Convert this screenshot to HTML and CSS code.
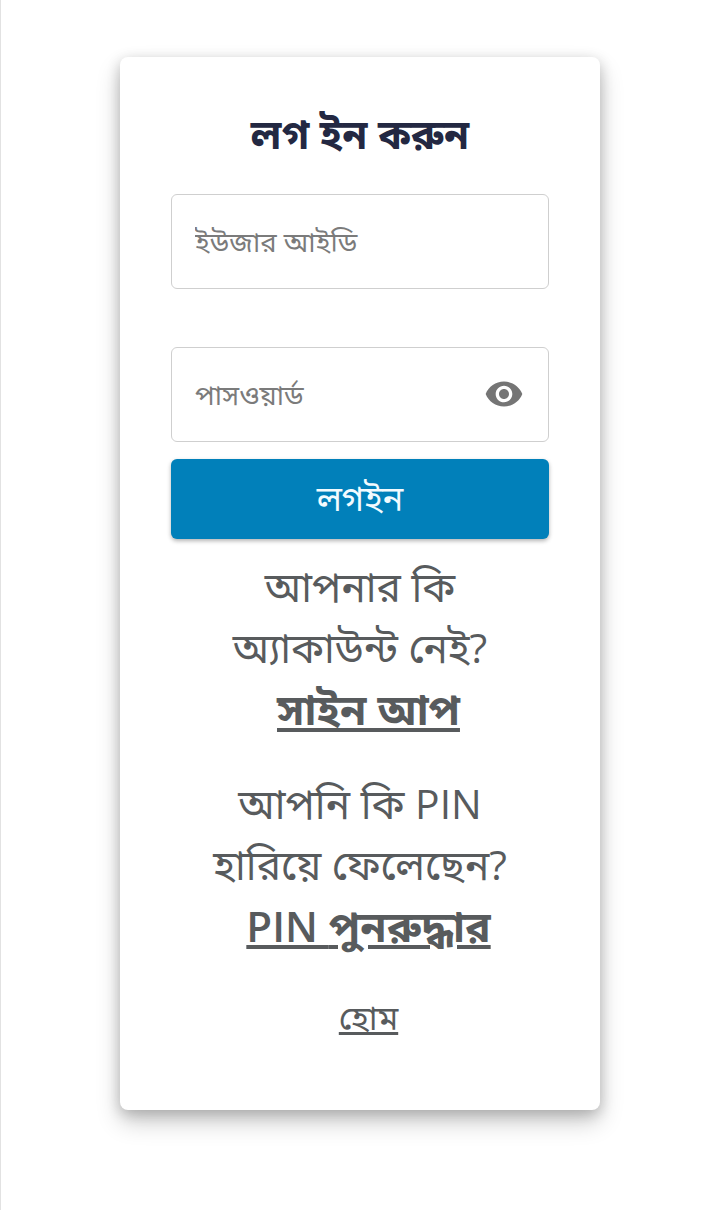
FILE: index.html
```html
<!DOCTYPE html>
<html lang="bn">
<head>
<meta charset="utf-8">
<title>লগ ইন করুন</title>
<link rel="stylesheet" href="styles.css">
</head>
<body>
<main class="page">
  <section class="card">
    <h1 class="title">লগ ইন করুন</h1>
    <form class="form">
      <div class="field field-user"><input class="input" type="text" placeholder="ইউজার আইডি"></div>
      <div class="field">
        <input class="input" type="password" placeholder="পাসওয়ার্ড">
        <svg class="eye" viewBox="0 0 24 24" aria-hidden="true"><path d="M12 4.5C7 4.5 2.73 7.61 1 12c1.73 4.39 6 7.5 11 7.5s9.27-3.11 11-7.5c-1.73-4.39-6-7.5-11-7.5zM12 17c-2.76 0-5-2.24-5-5s2.24-5 5-5 5 2.24 5 5-2.24 5-5 5zm0-8c-1.66 0-3 1.34-3 3s1.34 3 3 3 3-1.34 3-3-1.34-3-3-3z"/></svg>
      </div>
      <button class="submit" type="button">লগইন</button>
    </form>
    <p class="prompt">আপনার কি<br>অ্যাকাউন্ট নেই?<br><a class="link strong" href="#">সাইন আপ</a></p>
    <p class="prompt second">আপনি কি PIN<br>হারিয়ে ফেলেছেন?<br><a class="link strong" href="#"><span class="latin">PIN </span>পুনরুদ্ধার</a></p>
    <p class="home"><a class="link" href="#">হোম</a></p>
  </section>
</main>
</body>
</html>
```
FILE: styles.css
```css
* { box-sizing: border-box; }
html, body { margin: 0; height: 100%; }
body {
  background: #fff;
  border-left: 1px solid #e2e2e2;
  font-family: "Open Sans", "Noto Sans Bengali", "Noto Sans", sans-serif;
  color: #585b5d;
}
.page { padding: 57px 119px 0 119px; }
.card {
  height: 1053px;
  background: #fff;
  border-radius: 8px;
  padding: 50px 51px 0;
  box-shadow: 0 12px 24px rgba(0,0,0,.2), 0 4px 14px rgba(0,0,0,.2);
}
.title {
  margin: 0 0 34px;
  text-align: center;
  font-size: 40.5px;
  line-height: 53px;
  font-weight: 700;
  color: #232842;
}
.form { display: flex; flex-direction: column; }
.field { position: relative; height: 95px; }
.field-user { margin-bottom: 58px; }
.input {
  display: block;
  width: 100%;
  height: 100%;
  padding: 0 23px;
  border: 1px solid #cfcfcf;
  border-radius: 6px;
  background: #fff;
  font: inherit;
  font-size: 27.5px;
  outline: none;
}
.input::placeholder { color: #7b7b7b; opacity: 1; }
.eye { position: absolute; right: 24px; top: 27px; width: 42px; height: 40px; fill: #757575; }
.submit {
  margin-top: 17px;
  height: 80px;
  border: 0;
  border-radius: 6px;
  background: #0180ba;
  color: #f2fbff;
  font: inherit;
  font-size: 34.5px;
  box-shadow: 0 2px 4px rgba(0,0,0,.3);
}
.prompt {
  margin: 17px 0 0;
  text-align: center;
  font-size: 40.8px;
  line-height: 61px;
}
.second { margin-top: 33px; }
.link { color: inherit; text-decoration: underline; }
.strong { font-weight: 700; margin-left: 17px; font-size: 42.5px; }
.latin { font-weight: 600; font-size: 42px; }
.home { margin: 37px 0 0; text-align: center; font-size: 33.5px; padding-left: 17px; }
```
